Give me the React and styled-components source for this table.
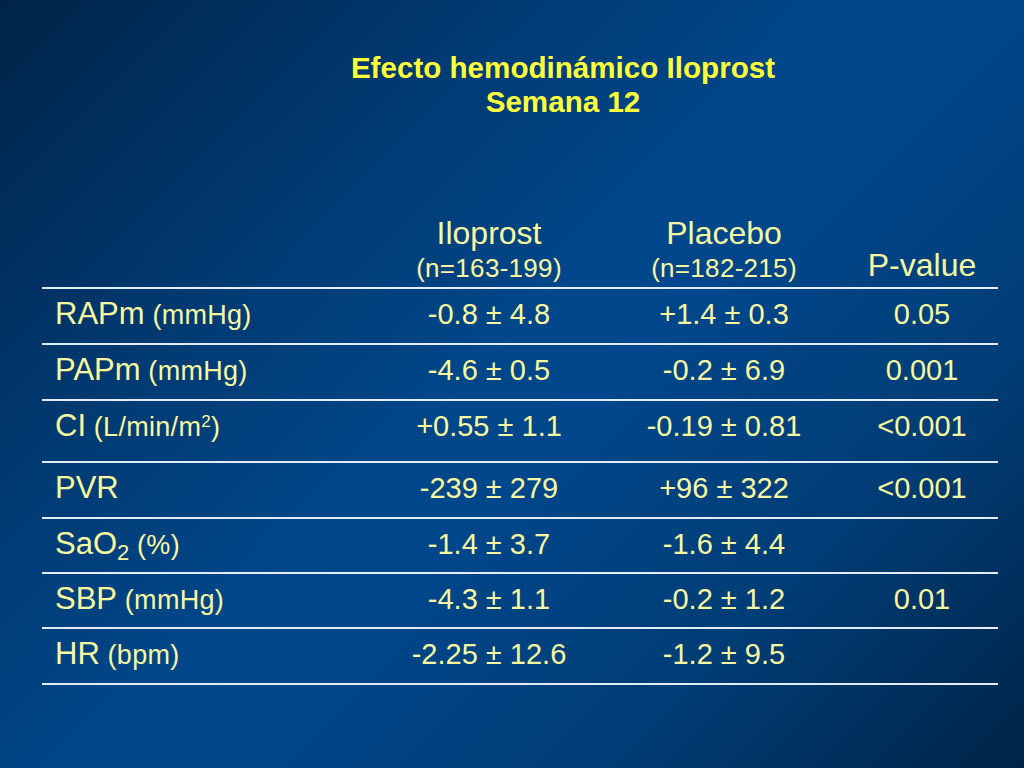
import styled, {createGlobalStyle} from 'styled-components';

const GlobalStyle = createGlobalStyle`
    html, body {
        margin: 0;
        padding: 0;
    }
    body {
        font-family: "Liberation Sans", Arial, sans-serif;
    }
`

const colors = {
    text: '#f8f8a0',
    title: '#ffff3a',
    line: '#e2ecf4',
}

const Slide = styled.div`
    width: 1024px;
    height: 768px;
    overflow: hidden;
    background: linear-gradient(135deg, #002448 0%, #003a72 28%, #00478a 48%, #00468a 56%, #003d76 76%, #002448 100%);
    padding-top: 51px;
    box-sizing: border-box;
`

const Title = styled.h1`
    margin: 0;
    padding-left: 102px;
    text-align: center;
    color: ${colors.title};
    font-size: 29.6px;
    line-height: 34px;
    font-weight: bold;
`

const Table = styled.div`
    margin: 94px 0 0 42px;
    width: 956px;
`

const Row = styled.div`
    display: grid;
    grid-template-columns: 334px 226px 244px 152px;
    box-sizing: border-box;
    height: ${(p) => p.$h || 56}px;
    padding-top: 7px;
    border-top: 2px solid ${colors.line};
    border-bottom: ${(p) => (p.$last ? `2px solid ${colors.line}` : 'none')};
    color: ${colors.text};
`

const HeadRow = styled.div`
    display: grid;
    grid-template-columns: 334px 226px 244px 152px;
    align-items: end;
    padding-bottom: 4px;
    color: ${colors.text};
`

const HeadCell = styled.div`
    text-align: center;
`

const HeadName = styled.div`
    font-size: 32px;
    line-height: ${(p) => p.$lh || 40}px;
`

const HeadSub = styled.div`
    font-size: 26px;
    line-height: 30px;
    letter-spacing: 0.3px;
`

const Label = styled.div`
    padding-left: 13px;
    font-size: 31px;
    line-height: 36px;
    white-space: nowrap;
`

const Unit = styled.span`
    font-size: 27px;
    letter-spacing: 0.3px;
`

const Sub = styled.sub`
    font-size: 22px;
    vertical-align: -6px;
    line-height: 0;
`

const Sup = styled.sup`
    font-size: 17px;
    vertical-align: 9px;
    line-height: 0;
`

const Value = styled.div`
    text-align: center;
    font-size: 29px;
    line-height: 36px;
`

const rows = [
    {name: 'RAPm', unit: ' (mmHg)', ilo: '-0.8 ± 4.8', pla: '+1.4 ± 0.3', p: '0.05', h: 56},
    {name: 'PAPm', unit: ' (mmHg)', ilo: '-4.6 ± 0.5', pla: '-0.2 ± 6.9', p: '0.001', h: 56},
    {name: 'CI', unit: <> (L/min/m<Sup>2</Sup>)</>, ilo: '+0.55 ± 1.1', pla: '-0.19 ± 0.81', p: '<0.001', h: 62},
    {name: 'PVR', unit: '', ilo: '-239 ± 279', pla: '+96 ± 322', p: '<0.001', h: 56},
    {name: <>SaO<Sub>2</Sub></>, unit: ' (%)', ilo: '-1.4 ± 3.7', pla: '-1.6 ± 4.4', p: '', h: 55},
    {name: 'SBP', unit: ' (mmHg)', ilo: '-4.3 ± 1.1', pla: '-0.2 ± 1.2', p: '0.01', h: 55},
    {name: 'HR', unit: ' (bpm)', ilo: '-2.25 ± 12.6', pla: '-1.2 ± 9.5', p: '', h: 58},
]

function App(){
    return(
        <Slide>
            <GlobalStyle/>
            <Title>
                Efecto hemodinámico Iloprost<br/>
                Semana 12
            </Title>

            <Table>
                <HeadRow>
                    <div/>
                    <HeadCell>
                        <HeadName>Iloprost</HeadName>
                        <HeadSub>(n=163-199)</HeadSub>
                    </HeadCell>
                    <HeadCell>
                        <HeadName>Placebo</HeadName>
                        <HeadSub>(n=182-215)</HeadSub>
                    </HeadCell>
                    <HeadCell>
                        <HeadName $lh={36}>P-value</HeadName>
                    </HeadCell>
                </HeadRow>

                {rows.map((r, i) => (
                    <Row key={i} $h={r.h} $last={i === rows.length - 1}>
                        <Label>{r.name}{r.unit ? <Unit>{r.unit}</Unit> : null}</Label>
                        <Value>{r.ilo}</Value>
                        <Value>{r.pla}</Value>
                        <Value>{r.p}</Value>
                    </Row>
                ))}
            </Table>
        </Slide>
    )
}
export default App
